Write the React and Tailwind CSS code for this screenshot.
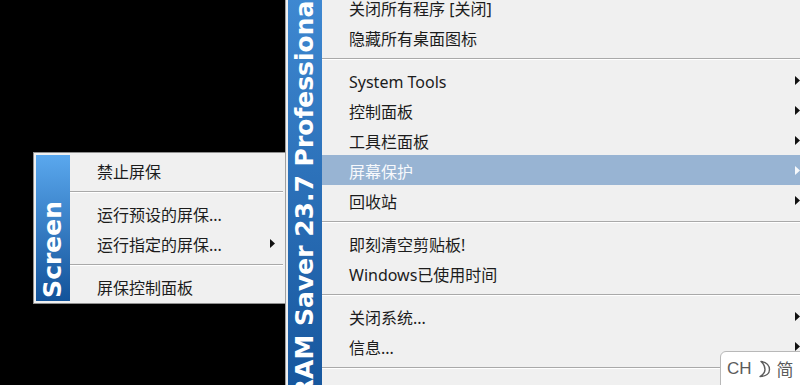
import React from 'react';

const Arrow = ({ light }) => (
  <svg width="5" height="9" viewBox="0 0 5 9" className="shrink-0">
    <polygon points="0,0 5,4.5 0,9" fill={light ? '#f7f9fc' : '#111'} />
  </svg>
);

const Item = ({ label, arrow, active, pr = 'pr-[22px]' }) => (
  <div
    className={`flex h-[30px] items-center justify-between pl-[27px] ${pr} ${
      active ? 'bg-[#98b4d3] text-[#f7f9fc]' : 'text-[#1c1c1c]'
    }`}
  >
    <span className="pt-[3px] whitespace-nowrap">{label}</span>
    {arrow && <Arrow light={active} />}
  </div>
);

const Sep = () => (
  <div className="pt-[6px] pb-[5px]">
    <div className="border-t border-b border-t-[#a9a9a9] border-b-white" />
  </div>
);

const Banner = ({ text, className }) => (
  <div className={`flex w-[34px] shrink-0 flex-col items-center justify-end overflow-hidden ${className}`}>
    <span className="shrink-0 rotate-180 whitespace-nowrap font-['DejaVu_Sans',sans-serif] text-[25px] font-bold leading-[34px] text-white [writing-mode:vertical-rl]">
      {text}
    </span>
  </div>
);

const mainItems = [
  { label: '关闭所有程序 [关闭]' },
  { label: '隐藏所有桌面图标' },
  { sep: true },
  { label: 'System Tools', arrow: true },
  { label: '控制面板', arrow: true },
  { label: '工具栏面板', arrow: true },
  { label: '屏幕保护', arrow: true, active: true },
  { label: '回收站', arrow: true },
  { sep: true },
  { label: '即刻清空剪贴板!' },
  { label: 'Windows已使用时间' },
  { sep: true },
  { label: '关闭系统...', arrow: true },
  { label: '信息...', arrow: true },
  { sep: true },
];

const screenItems = [
  { label: '禁止屏保' },
  { sep: true },
  { label: '运行预设的屏保...' },
  { label: '运行指定的屏保...', arrow: true },
  { sep: true },
  { label: '屏保控制面板' },
];

export default function App() {
  return (
    <div className="relative h-[385px] w-[800px] overflow-hidden bg-black font-['Noto_Sans','Noto_Sans_CJK_SC',sans-serif] text-[16px]">
      {/* screen saver submenu */}
      <div className="absolute left-[33px] top-[152px] flex w-[253px] border border-[#8f8f8f] bg-[#f0f0f0] p-[2px]">
        <Banner text="Screen" className="bg-gradient-to-b from-[#5aa8ee] to-[#12539a] pb-[3px]" />
        <div className="flex-1">
          {screenItems.map((it, i) =>
            it.sep ? <Sep key={i} /> : <Item key={i} {...it} pr="pr-[8px]" />
          )}
        </div>
      </div>

      {/* main tray menu */}
      <div className="absolute left-[285px] top-[-11px] flex w-[540px] border border-[#a0a0a0] bg-[#f0f0f0] p-[2px]">
        <Banner
          text="RAM Saver 23.7 Professional"
          className="bg-gradient-to-b from-[#3f89d2] to-[#15559c] pb-[2px]"
        />
        <div className="flex-1 pb-[26px]">
          {mainItems.map((it, i) => (it.sep ? <Sep key={i} /> : <Item key={i} {...it} />))}
        </div>
      </div>

      {/* IME indicator */}
      <div className="absolute left-[720px] top-[351px] flex h-[40px] w-[90px] items-start gap-[6px] rounded-[6px] border border-[#b8b8b8] bg-white pl-[6px] pt-[6px] font-['Liberation_Sans','Noto_Sans_CJK_SC',sans-serif] text-[17px] leading-[22px] text-[#5c5c5c]">
        <span>CH</span>
        <svg width="13" height="18" viewBox="0 0 13 18" className="mt-[2px]">
          <path
            d="M3 1.5 C9 2 11.5 6 11.5 9.5 C11.5 13.5 8 16.5 2 16.5 C5.5 14.5 7 12 7 9.5 C7 6 5.5 3.5 3 1.5 Z"
            fill="none"
            stroke="#5c5c5c"
            strokeWidth="1.4"
            strokeLinejoin="round"
          />
        </svg>
        <span className="font-['Noto_Sans_CJK_SC',sans-serif]">简</span>
      </div>
    </div>
  );
}
